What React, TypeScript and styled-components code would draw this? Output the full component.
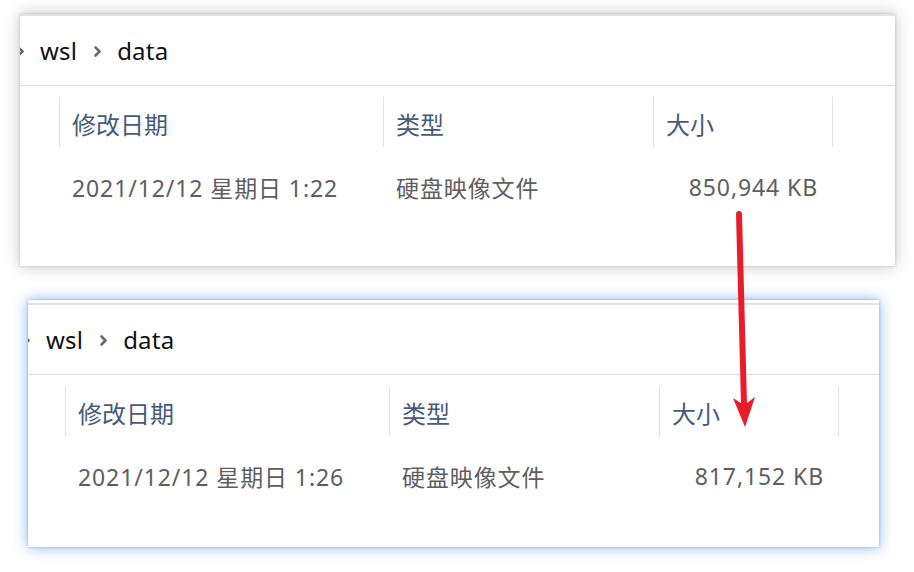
import React from 'react'
import styled, { createGlobalStyle } from 'styled-components'

const GlobalStyle = createGlobalStyle`
  html, body {
    margin: 0;
    padding: 0;
    background: #ffffff;
  }
  body {
    font-family: "Noto Sans", "Noto Sans CJK SC", sans-serif;
  }
`

const Stage = styled.div`
  position: relative;
  width: 914px;
  height: 572px;
  overflow: hidden;
  display: flex;
  flex-direction: column;
  align-items: flex-start;
`

interface PanelProps {
  $left: number
  $top: number
  $width: number
  $height: number
  $gap: number
  $glow: 'gray' | 'blue'
}

const Panel = styled.div<PanelProps>`
  margin-left: ${p => p.$left}px;
  margin-top: ${p => p.$top}px;
  width: ${p => p.$width}px;
  height: ${p => p.$height}px;
  padding-top: ${p => p.$gap}px;
  box-sizing: border-box;
  background: #ffffff;
  overflow: hidden;
  display: flex;
  flex-direction: column;
  box-shadow: ${p => p.$glow === 'blue'
    ? '0 0 3px rgba(120, 170, 245, 0.9), 0 0 14px rgba(110, 165, 245, 0.75)'
    : '0 0 3px rgba(0, 0, 0, 0.18), 0 0 16px rgba(0, 0, 0, 0.22)'};
`

const TopRule = styled.div`
  height: 2px;
  background: #e2e2e2;
`

const Breadcrumb = styled.div<{ $inset: number }>`
  height: 69px;
  padding-left: ${p => p.$inset}px;
  display: flex;
  align-items: center;
  gap: 15px;
  font-size: 24px;
  color: #111111;
  border-bottom: 1px solid #dcdcdc;
`

const Crumb = styled.span`
  line-height: 1;
  padding-top: 1px;
  letter-spacing: 0.2px;
`

const Chevron = styled.svg<{ $clip?: boolean }>`
  width: 9px;
  height: 13px;
  flex: none;
  margin-top: 2px;
  margin-left: ${p => (p.$clip ? '-24px' : '1px')};
`

const Columns = styled.div<{ $inset: number }>`
  padding-left: ${p => p.$inset}px;
  display: grid;
  grid-template-columns: 19px 324px 270px 180px;
`

const HeadCell = styled.div<{ $edge?: boolean }>`
  margin-top: 11px;
  height: 50px;
  display: flex;
  align-items: center;
  padding-left: 12px;
  padding-top: 2px;
  box-sizing: border-box;
  border-left: ${p => (p.$edge ? 'none' : '1px solid #e1e1e1')};
  font-size: 24px;
  color: #465b77;
`

const LastHead = styled(HeadCell)`
  border-right: 1px solid #e1e1e1;
`

const DataCell = styled.div<{ $align?: 'left' | 'right' }>`
  height: 40px;
  margin-top: 20px;
  display: flex;
  align-items: center;
  justify-content: ${p => (p.$align === 'right' ? 'flex-end' : 'flex-start')};
  padding-left: 13px;
  padding-right: ${p => (p.$align === 'right' ? '15px' : '0')};
  font-size: 23px;
  letter-spacing: 0.9px;
  color: #5e5e5e;
  white-space: nowrap;
`

const Arrow = styled.svg`
  position: absolute;
  left: 0;
  top: 0;
  width: 914px;
  height: 572px;
  pointer-events: none;
`

function ChevronIcon({ clip }: { clip?: boolean }) {
  return (
    <Chevron $clip={clip} viewBox="0 0 9 13">
      <path d="M2.5 2.5 L6.5 6.5 L2.5 10.5" fill="none" stroke="#6a6a6a" strokeWidth="2.6" strokeLinecap="round" strokeLinejoin="round" />
    </Chevron>
  )
}

interface Entry {
  date: string
  kind: string
  size: string
}

interface ExplorerProps extends Omit<PanelProps, '$gap'> {
  gap: number
  inset: number
  entry: Entry
}

function Explorer({ gap, inset, entry, ...rest }: ExplorerProps) {
  return (
    <Panel $gap={gap} {...rest}>
      <TopRule />
      <Breadcrumb $inset={inset}>
        <ChevronIcon clip />
        <Crumb>wsl</Crumb>
        <ChevronIcon />
        <Crumb>data</Crumb>
      </Breadcrumb>
      <Columns $inset={inset}>
        <HeadCell $edge />
        <HeadCell>修改日期</HeadCell>
        <HeadCell>类型</HeadCell>
        <LastHead>大小</LastHead>
        <DataCell />
        <DataCell>{entry.date}</DataCell>
        <DataCell>{entry.kind}</DataCell>
        <DataCell $align="right">{entry.size}</DataCell>
      </Columns>
    </Panel>
  )
}

export default function App() {
  return (
    <>
      <GlobalStyle />
      <Stage>
        <Explorer
          $left={20} $top={14} $width={875} $height={252} $glow="gray"
          gap={0} inset={20}
          entry={{ date: '2021/12/12 星期日 1:22', kind: '硬盘映像文件', size: '850,944 KB' }}
        />
        <Explorer
          $left={28} $top={34} $width={851} $height={247} $glow="blue"
          gap={3} inset={18}
          entry={{ date: '2021/12/12 星期日 1:26', kind: '硬盘映像文件', size: '817,152 KB' }}
        />
        <Arrow viewBox="0 0 914 572">
          <line x1="739" y1="214" x2="744" y2="404" stroke="#e81d2a" strokeWidth="6" strokeLinecap="round" />
          <polygon points="733,398 744,405 755,397 745,427" fill="#e81d2a" />
        </Arrow>
      </Stage>
    </>
  )
}
